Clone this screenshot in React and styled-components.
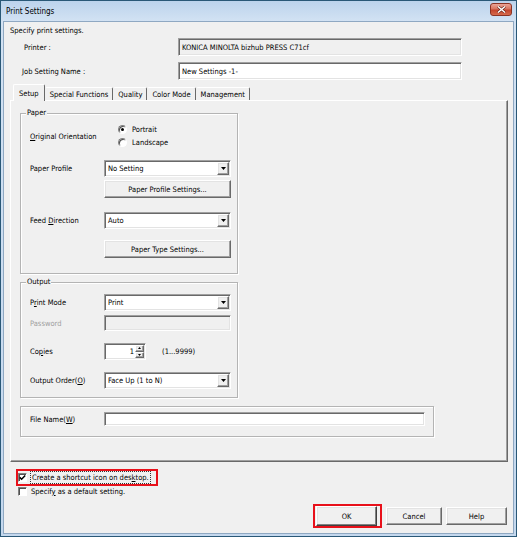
import React from 'react';
import styled, { createGlobalStyle, css } from 'styled-components';

const GlobalStyle = createGlobalStyle`
  html, body {
    margin: 0;
    padding: 0;
    background: #fff;
  }
  body {
    font-family: "DejaVu Sans Condensed", "Liberation Sans", sans-serif;
    font-size: 7.5px;
    color: #000;
  }
  * {
    box-sizing: border-box;
  }
`;

const sunken = css`
  border: 1px solid;
  border-color: #a0a0a0 #fff #fff #a0a0a0;
  box-shadow: inset 1px 1px 0 #696969, inset -1px -1px 0 #e3e3e3;
`;

const raised = css`
  border: 1px solid;
  border-color: #fff #696969 #696969 #fff;
  box-shadow: inset -1px -1px 0 #a0a0a0, inset 1px 1px 0 #e3e3e3;
  background: #f0f0f0;
`;

const Window = styled.div`
  width: 517px;
  height: 537px;
  display: flex;
  flex-direction: column;
  border: 1px solid #2a5877;
  background: linear-gradient(#bcd3ec, #d2e2f3 20px, #c4d8ee);
  padding: 0 2px 2px;
`;

const TitleBar = styled.div`
  height: 20px;
  display: flex;
  align-items: center;
  justify-content: space-between;
  padding: 0 2px 0 3px;
`;

const Title = styled.span`
  font-size: 8px;
  color: #000;
`;

const CloseButton = styled.div`
  width: 22px;
  height: 13px;
  align-self: flex-start;
  margin-top: 2px;
  border: 1px solid #8b3324;
  border-radius: 3px;
  background: linear-gradient(#eba597, #d8745f 45%, #c4442c 55%, #d56a4c);
  display: flex;
  align-items: center;
  justify-content: center;
`;

const Client = styled.div`
  flex: 1;
  display: flex;
  flex-direction: column;
  background: #f0f0f0;
  border: 1px solid #8fa8c2;
`;

const Intro = styled.div`
  margin: 3px 0 0 6px;
  line-height: 12px;
`;

const HeaderRow = styled.div`
  display: grid;
  grid-template-columns: 174px 284px;
  align-items: center;
  height: 18px;
  margin-top: ${p => p.$mt}px;
`;

const HeaderLabel = styled.span`
  padding-left: ${p => p.$pl}px;
`;

const TextField = styled.div`
  ${sunken};
  height: ${p => p.$h || 18}px;
  width: ${p => (p.$w ? `${p.$w}px` : 'auto')};
  background: ${p => (p.$readOnly ? '#f0f0f0' : '#fff')};
  display: flex;
  align-items: center;
  padding-left: 3px;
  white-space: nowrap;
`;

const TabStrip = styled.div`
  display: flex;
  align-items: flex-end;
  height: 16px;
  margin: 4px 0 0 9px;
`;

const Tab = styled.div`
  position: relative;
  z-index: ${p => (p.$active ? 1 : 0)};
  height: ${p => (p.$active ? 17 : 13)}px;
  margin-bottom: ${p => (p.$active ? -1 : 0)}px;
  padding: 0 ${p => (p.$active ? 5 : 4)}px;
  display: flex;
  align-items: center;
  background: #f0f0f0;
  border-top: 1px solid #fff;
  border-left: 1px solid ${p => (p.$active ? '#fff' : 'transparent')};
  border-right: 1px solid #696969;
  border-radius: 2px 2px 0 0;
  white-space: nowrap;
`;

const Panel = styled.div`
  margin-left: 6px;
  width: 498px;
  height: 362px;
  display: flex;
  flex-direction: column;
  padding-left: 9px;
  border: 1px solid;
  border-color: #fff #696969 #696969 #fff;
  box-shadow: inset -1px -1px 0 #a0a0a0;
`;

const Group = styled.div`
  width: ${p => p.$w}px;
  height: ${p => p.$h}px;
  margin-top: ${p => p.$mt}px;
  padding: ${p => p.$pt}px 0 0 9px;
  display: flex;
  flex-direction: column;
  border: 1px solid #b4b4b4;
  box-shadow: inset 1px 1px 0 #fff, 1px 1px 0 #fff;
`;

/* sits on the group's top border and takes no room in the flow */
const Legend = styled.span`
  align-self: flex-start;
  margin: -${p => p.$pt + 7}px 0 ${p => p.$pt - 5}px -4px;
  padding: 0 1px;
  height: 12px;
  line-height: 12px;
  background: #f0f0f0;
`;

const FormRow = styled.div`
  display: grid;
  grid-template-columns: 74px auto;
  align-items: center;
  margin-top: ${p => p.$mt || 0}px;
`;

const Label = styled.span`
  color: ${p => (p.$disabled ? '#a0a0a0' : '#000')};
  white-space: nowrap;
`;

const U = styled.span`
  text-decoration: underline;
`;

const Combo = styled.div`
  ${sunken};
  width: 127px;
  height: 17px;
  background: #fff;
  display: flex;
  align-items: stretch;
  padding: 1px;
`;

const ComboText = styled.span`
  flex: 1;
  display: flex;
  align-items: center;
  padding-left: 2px;
`;

const ComboArrow = styled.span`
  ${raised};
  width: 12px;
  display: flex;
  align-items: center;
  justify-content: center;
`;

const PushButton = styled.div`
  ${raised};
  width: ${p => p.$w || 127}px;
  height: 18px;
  display: flex;
  align-items: center;
  justify-content: center;
  white-space: nowrap;
`;

const RadioList = styled.div`
  display: flex;
  flex-direction: column;
  margin-left: 14px;
`;

const RadioItem = styled.div`
  display: flex;
  align-items: center;
  gap: 5px;
  height: 13px;
`;

const RadioDot = styled.span`
  width: 9px;
  height: 9px;
  border-radius: 50%;
  border: 1px solid;
  border-color: #808080 #fff #fff #808080;
  box-shadow: inset 1px 1px 0 #505050;
  background: #fff;
  display: flex;
  align-items: center;
  justify-content: center;

  &::after {
    content: '';
    width: 3px;
    height: 3px;
    border-radius: 50%;
    background: ${p => (p.$checked ? '#000' : 'transparent')};
  }
`;

const Spin = styled.div`
  ${sunken};
  width: 42px;
  height: 17px;
  background: #fff;
  display: flex;
  padding: 1px;
`;

const SpinValue = styled.span`
  flex: 1;
  display: flex;
  align-items: center;
  justify-content: flex-end;
  padding-right: 1px;
`;

const SpinButtons = styled.div`
  width: 9px;
  display: flex;
  flex-direction: column;
`;

const SpinHalf = styled.span`
  ${raised};
  flex: 1;
  display: flex;
  align-items: center;
  justify-content: center;
`;

const Range = styled.span`
  margin-left: 16px;
`;

const Inline = styled.div`
  display: flex;
  align-items: center;
`;

const CheckArea = styled.div`
  margin-top: 7px;
  display: flex;
  flex-direction: column;
  align-items: flex-start;
`;

const Highlight = styled.div`
  border: 2px solid #e8101a;
  display: flex;
  align-items: center;
  height: ${p => p.$h}px;
  margin-left: ${p => p.$ml || 0}px;
  padding: ${p => p.$pad};
`;

const CheckRow = styled.div`
  display: flex;
  align-items: center;
  gap: 4px;
  height: 13px;
  margin: ${p => p.$m || 0};
`;

const Box = styled.span`
  width: 9px;
  height: 9px;
  background: #fff;
  border: 1px solid;
  border-color: #808080 #fff #fff #808080;
  box-shadow: inset 1px 1px 0 #505050;
  display: flex;
  align-items: center;
  justify-content: center;
`;

const FocusText = styled.span`
  outline: 1px dotted #333;
  padding: 0 1px;
  line-height: 11px;
`;

const ButtonRow = styled.div`
  margin-top: 6px;
  height: 24px;
  display: flex;
  align-items: center;
  justify-content: flex-end;
  gap: 4px;
  padding-right: 6px;
`;

const DefaultButton = styled(PushButton)`
  height: 20px;
  border-color: #fff #404040 #404040 #fff;
  box-shadow: inset -1px -1px 0 #808080, inset 1px 1px 0 #e3e3e3;
`;

const Triangle = () => (
  <svg width="5" height="3" viewBox="0 0 5 3">
    <path d="M0 0 H5 L2.5 3 Z" fill="#000" />
  </svg>
);

const SmallArrow = ({ up }) => (
  <svg width="3" height="2" viewBox="0 0 3 2">
    <path d={up ? 'M0 2 H3 L1.5 0 Z' : 'M0 0 H3 L1.5 2 Z'} fill="#000" />
  </svg>
);

const Select = ({ children }) => (
  <Combo>
    <ComboText>{children}</ComboText>
    <ComboArrow>
      <Triangle />
    </ComboArrow>
  </Combo>
);

const Check = ({ checked }) => (
  <Box>
    {checked && (
      <svg width="7" height="7" viewBox="0 0 7 7">
        <path d="M0.8 3.4 L2.6 5.2 L6.2 1.4" fill="none" stroke="#000" strokeWidth="1.5" />
      </svg>
    )}
  </Box>
);

const tabs = ['Setup', 'Special Functions', 'Quality', 'Color Mode', 'Management'];

export default function App() {
  return (
    <>
      <GlobalStyle />
      <Window>
        <TitleBar>
          <Title>Print Settings</Title>
          <CloseButton>
            <svg width="9" height="7" viewBox="0 0 9 7">
              <path d="M1 0.5 L8 6.5 M8 0.5 L1 6.5" stroke="#5a1a10" strokeWidth="2.6" />
              <path d="M1 0.5 L8 6.5 M8 0.5 L1 6.5" stroke="#fff" strokeWidth="1.5" />
            </svg>
          </CloseButton>
        </TitleBar>
        <Client>
          <Intro>Specify print settings.</Intro>
          <HeaderRow $mt={1}>
            <HeaderLabel $pl={20}>Printer :</HeaderLabel>
            <TextField $readOnly>KONICA MINOLTA bizhub PRESS C71cf</TextField>
          </HeaderRow>
          <HeaderRow $mt={6}>
            <HeaderLabel $pl={18}>
              <U>J</U>ob Setting Name :
            </HeaderLabel>
            <TextField>New Settings -1-</TextField>
          </HeaderRow>

          <TabStrip>
            {tabs.map((t, i) => (
              <Tab key={t} $active={i === 0}>
                {t}
              </Tab>
            ))}
          </TabStrip>
          <Panel>
            <Group $w={218} $h={161} $mt={12} $pt={9}>
              <Legend $pt={9}>Paper</Legend>
              <FormRow>
                <Label>
                  <U>O</U>riginal Orientation
                </Label>
                <RadioList>
                  <RadioItem>
                    <RadioDot $checked />
                    Portrait
                  </RadioItem>
                  <RadioItem>
                    <RadioDot />
                    Landscape
                  </RadioItem>
                </RadioList>
              </FormRow>
              <FormRow $mt={11}>
                <Label>Paper Profile</Label>
                <Select>No Setting</Select>
              </FormRow>
              <FormRow $mt={3}>
                <span />
                <PushButton>Paper Profile Settings...</PushButton>
              </FormRow>
              <FormRow $mt={14}>
                <Label>
                  Feed <U>D</U>irection
                </Label>
                <Select>Auto</Select>
              </FormRow>
              <FormRow $mt={11}>
                <span />
                <PushButton>Paper Type Settings...</PushButton>
              </FormRow>
            </Group>

            <Group $w={218} $h={116} $mt={8} $pt={11}>
              <Legend $pt={11}>Output</Legend>
              <FormRow>
                <Label>
                  P<U>r</U>int Mode
                </Label>
                <Select>Print</Select>
              </FormRow>
              <FormRow $mt={4}>
                <Label $disabled>Password</Label>
                <TextField $readOnly $w={127} $h={16} />
              </FormRow>
              <FormRow $mt={12}>
                <Label>
                  Co<U>p</U>ies
                </Label>
                <Inline>
                  <Spin>
                    <SpinValue>1</SpinValue>
                    <SpinButtons>
                      <SpinHalf>
                        <SmallArrow up />
                      </SpinHalf>
                      <SpinHalf>
                        <SmallArrow />
                      </SpinHalf>
                    </SpinButtons>
                  </Spin>
                  <Range>(1...9999)</Range>
                </Inline>
              </FormRow>
              <FormRow $mt={12}>
                <Label>
                  Output Order(<U>O</U>)
                </Label>
                <Select>Face Up (1 to N)</Select>
              </FormRow>
            </Group>

            <Group $w={414} $h={31} $mt={8} $pt={5}>
              <FormRow>
                <Label>
                  File Name(<U>W</U>)
                </Label>
                <TextField $w={321} $h={14} />
              </FormRow>
            </Group>
          </Panel>

          <CheckArea>
            <Highlight $h={17} $ml={12} $pad="0 6px 0 0">
              <CheckRow>
                <Check checked />
                <FocusText>
                  Create a shortcut icon on des<U>k</U>top.
                </FocusText>
              </CheckRow>
            </Highlight>
            <CheckRow $m="-1px 0 0 14px">
              <Check />
              <span>
                Specif<U>y</U> as a default setting.
              </span>
            </CheckRow>
          </CheckArea>

          <ButtonRow>
            <Highlight $h={24} $pad="0 3px 0 1px">
              <DefaultButton $w={61}>OK</DefaultButton>
            </Highlight>
            <PushButton $w={56}>Cancel</PushButton>
            <PushButton $w={61}>Help</PushButton>
          </ButtonRow>
        </Client>
      </Window>
    </>
  );
}
